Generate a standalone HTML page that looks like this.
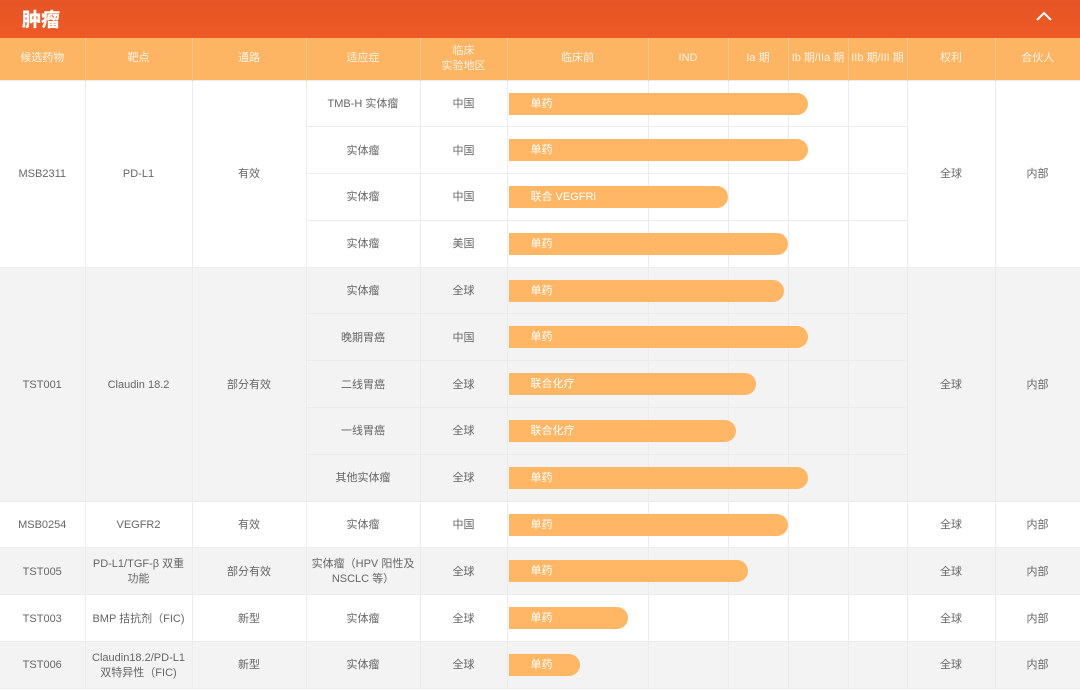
<!DOCTYPE html>
<html><head><meta charset="utf-8"><style>
*{margin:0;padding:0;box-sizing:border-box}
body{width:1080px;height:690px;overflow:hidden;background:#fff;font-family:"Liberation Sans","Noto Sans CJK SC",sans-serif;}
.top{height:38px;background:linear-gradient(#e65427,#ee5a26);position:relative}
.top b{position:absolute;left:22px;top:5px;color:#fff;font-size:19px;font-family:"Noto Sans CJK SC",sans-serif;font-weight:900}
.top svg{position:absolute;left:1035px;top:10px}
table{border-collapse:collapse;table-layout:fixed;width:1080px;font-size:11px;color:#666;text-align:center}
th{background:#fdb463;color:#fff3e6;font-weight:normal;height:42px;border-left:1px solid #f7c58c;font-size:11px;line-height:15px}
td{border:1px solid #ececec;height:46.8px;line-height:15px;padding:2px 2px 0}
td:first-child,th:first-child{border-left:none}
.g td{background:#f3f3f3}
.c{position:relative;overflow:visible;padding:0}
.bar{position:absolute;left:1px;top:12px;height:22px;background:#ffb766;border-radius:0 11px 11px 0;color:#fff;text-align:left;padding-left:22px;line-height:22px;font-size:11px;z-index:2}
</style></head><body>
<div class="top"><b>肿瘤</b><svg width="18" height="12" viewBox="0 0 18 12"><path d="M2 10 L9 3 L16 10" stroke="#fff" stroke-width="2" fill="none"/></svg></div>
<table>
<colgroup><col style="width:85px"><col style="width:107px"><col style="width:114px"><col style="width:114px"><col style="width:87px"><col style="width:141px"><col style="width:80px"><col style="width:60px"><col style="width:60px"><col style="width:59px"><col style="width:88px"><col style="width:85px"></colgroup>
<tr><th>候选药物</th><th>靶点</th><th>通路</th><th>适应症</th><th>临床<br>实验地区</th><th>临床前</th><th>IND</th><th>Ia 期</th><th>Ib 期/IIa 期</th><th>IIb 期/III 期</th><th>权利</th><th>合伙人</th></tr>
<tr><td rowspan="4">MSB2311</td><td rowspan="4">PD-L1</td><td rowspan="4">有效</td><td>TMB-H 实体瘤</td><td>中国</td><td class="c"><div class="bar" style="width:299px">单药</div></td><td></td><td></td><td></td><td></td><td rowspan="4">全球</td><td rowspan="4">内部</td></tr>
<tr><td>实体瘤</td><td>中国</td><td class="c"><div class="bar" style="width:299px">单药</div></td><td></td><td></td><td></td><td></td></tr>
<tr><td>实体瘤</td><td>中国</td><td class="c"><div class="bar" style="width:219px">联合 VEGFRi</div></td><td></td><td></td><td></td><td></td></tr>
<tr><td>实体瘤</td><td>美国</td><td class="c"><div class="bar" style="width:279px">单药</div></td><td></td><td></td><td></td><td></td></tr>
<tr class="g"><td rowspan="5">TST001</td><td rowspan="5">Claudin 18.2</td><td rowspan="5">部分有效</td><td>实体瘤</td><td>全球</td><td class="c"><div class="bar" style="width:275px">单药</div></td><td></td><td></td><td></td><td></td><td rowspan="5">全球</td><td rowspan="5">内部</td></tr>
<tr class="g"><td>晚期胃癌</td><td>中国</td><td class="c"><div class="bar" style="width:299px">单药</div></td><td></td><td></td><td></td><td></td></tr>
<tr class="g"><td>二线胃癌</td><td>全球</td><td class="c"><div class="bar" style="width:247px">联合化疗</div></td><td></td><td></td><td></td><td></td></tr>
<tr class="g"><td>一线胃癌</td><td>全球</td><td class="c"><div class="bar" style="width:227px">联合化疗</div></td><td></td><td></td><td></td><td></td></tr>
<tr class="g"><td>其他实体瘤</td><td>全球</td><td class="c"><div class="bar" style="width:299px">单药</div></td><td></td><td></td><td></td><td></td></tr>
<tr><td>MSB0254</td><td>VEGFR2</td><td>有效</td><td>实体瘤</td><td>中国</td><td class="c"><div class="bar" style="width:279px">单药</div></td><td></td><td></td><td></td><td></td><td>全球</td><td>内部</td></tr>
<tr class="g"><td>TST005</td><td>PD-L1/TGF-β 双重功能</td><td>部分有效</td><td>实体瘤（HPV 阳性及 NSCLC 等）</td><td>全球</td><td class="c"><div class="bar" style="width:239px">单药</div></td><td></td><td></td><td></td><td></td><td>全球</td><td>内部</td></tr>
<tr><td>TST003</td><td>BMP 拮抗剂（FIC)</td><td>新型</td><td>实体瘤</td><td>全球</td><td class="c"><div class="bar" style="width:119px">单药</div></td><td></td><td></td><td></td><td></td><td>全球</td><td>内部</td></tr>
<tr class="g"><td>TST006</td><td>Claudin18.2/PD-L1 双特异性（FIC)</td><td>新型</td><td>实体瘤</td><td>全球</td><td class="c"><div class="bar" style="width:71px">单药</div></td><td></td><td></td><td></td><td></td><td>全球</td><td>内部</td></tr>
</table>
</body></html>
